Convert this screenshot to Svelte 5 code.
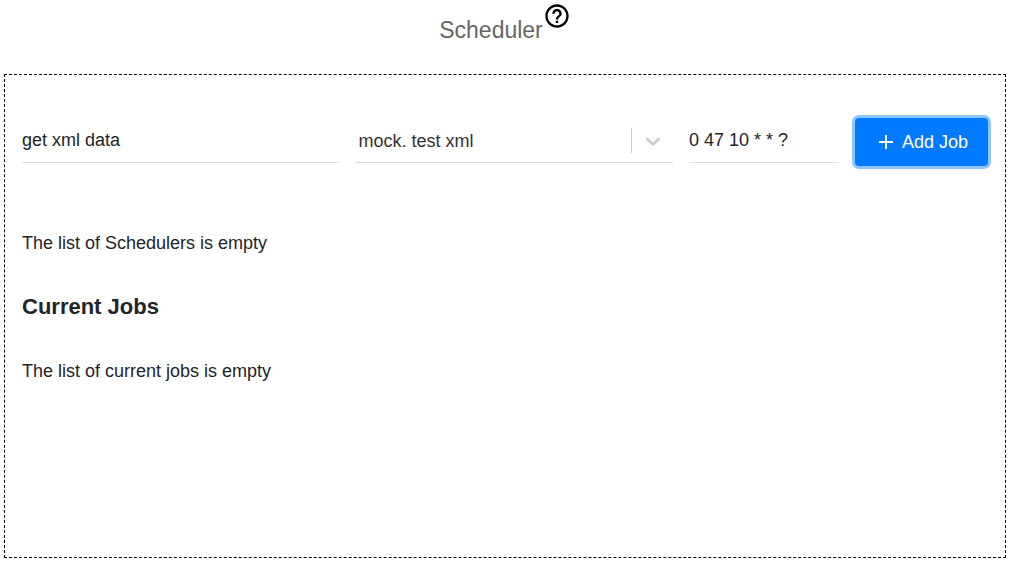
<script>
  let name = $state('get xml data');
  let task = $state('mock. test xml');
  let cron = $state('0 47 10 * * ?');
</script>

<div class="page">
  <header>
    <h1>Scheduler</h1>
    <button class="help" type="button" aria-label="Help">
      <svg viewBox="0 0 24 24" width="28" height="28" aria-hidden="true">
        <path d="M11 18h2v-2h-2v2zm1-16C6.480 2 2 6.480 2 12s4.480 10 10 10 10-4.480 10-10S17.520 2 12 2zm0 18c-4.410 0-8-3.590-8-8s3.590-8 8-8 8 3.590 8 8-3.590 8-8 8zm0-14c-2.210 0-4 1.790-4 4h2c0-1.100.9-2 2-2s2 .9 2 2c0 2-3 1.750-3 5h2c0-2.250 3-2.500 3-5 0-2.210-1.790-4-4-4z" />
      </svg>
    </button>
  </header>

  <main>
    <form onsubmit={(e) => e.preventDefault()}>
      <input class="field" type="text" aria-label="Name" bind:value={name} />
      <div class="picker">
        <select class="field" aria-label="Task" bind:value={task}>
          <option>mock. test xml</option>
        </select>
        <span class="indicator">
          <svg viewBox="0 0 20 20" width="24" height="24" aria-hidden="true">
            <path d="M4.516 7.548c0.436-0.446 1.043-0.481 1.576 0l3.908 3.747 3.908-3.747c0.533-0.481 1.141-0.446 1.574 0 0.436 0.445 0.408 1.197 0 1.615-0.406 0.418-4.695 4.502-4.695 4.502-0.217 0.223-0.502 0.335-0.787 0.335s-0.570-0.112-0.789-0.335c0 0-4.287-4.084-4.695-4.502s-0.436-1.170 0-1.615z" />
          </svg>
        </span>
      </div>
      <input class="field" type="text" aria-label="Cron expression" bind:value={cron} />
      <button class="add" type="submit">
        <svg viewBox="0 0 14 14" width="14" height="14" aria-hidden="true">
          <path d="M6 0h2v6h6v2H8v6H6V8H0V6h6z" />
        </svg>
        Add Job
      </button>
    </form>

    <p>The list of Schedulers is empty</p>
    <h2>Current Jobs</h2>
    <p>The list of current jobs is empty</p>
  </main>
</div>

<style>
  :global(body) {
    background: #fff;
  }

  .page {
    box-sizing: border-box;
    min-height: 100vh;
    padding: 4px 4px 5px;
    display: flex;
    flex-direction: column;
    color: #212529;
    font-family: 'Liberation Sans', Arial, sans-serif;
    font-size: 18px;
    line-height: 28px;
  }

  header {
    display: flex;
    justify-content: center;
    align-items: flex-start;
    height: 70px;
  }

  h1 {
    margin: 12px 0 0;
    color: #666;
    font-size: 23px;
    font-weight: 400;
  }

  .help {
    display: flex;
    margin: -2px 0 0;
    padding: 0;
    border: 0;
    background: none;
    color: #000;
    cursor: pointer;
  }

  main {
    flex: 1;
    padding: 43px 17px 17px;
    border: 1px dashed #000;
  }

  form {
    display: grid;
    grid-template-columns: 1fr 1fr 150px auto;
    gap: 16px;
    align-items: start;
    margin-bottom: 63px;
  }

  .field {
    box-sizing: border-box;
    width: 100%;
    min-width: 0;
    height: 45px;
    padding: 1px 0 0;
    border: 0;
    border-bottom: 1px solid #dedede;
    border-radius: 0;
    outline: 0;
    background: transparent;
    color: #212529;
    font: inherit;
  }

  select.field {
    appearance: none;
    padding: 1px 44px 0 3px;
    color: #333;
  }

  .picker {
    position: relative;
  }

  .indicator {
    position: absolute;
    top: 10px;
    right: 0;
    display: flex;
    align-items: center;
    height: 25px;
    padding: 0 8px 0 9px;
    border-left: 1px solid #ccc;
    color: #ccc;
    pointer-events: none;
  }

  .indicator svg,
  .add svg,
  .help svg {
    fill: currentColor;
  }

  .add {
    display: flex;
    align-items: center;
    gap: 9px;
    height: 48px;
    padding: 0 20px 0 24px;
    border: 0;
    border-radius: 4px;
    background: #007bff;
    box-shadow: 0 0 0 3px #8dc5ff;
    color: #fff;
    font: inherit;
    cursor: pointer;
  }

  p {
    margin: 0;
  }

  h2 {
    margin: 36px 0;
    font-size: 22px;
    font-weight: 700;
  }
</style>
